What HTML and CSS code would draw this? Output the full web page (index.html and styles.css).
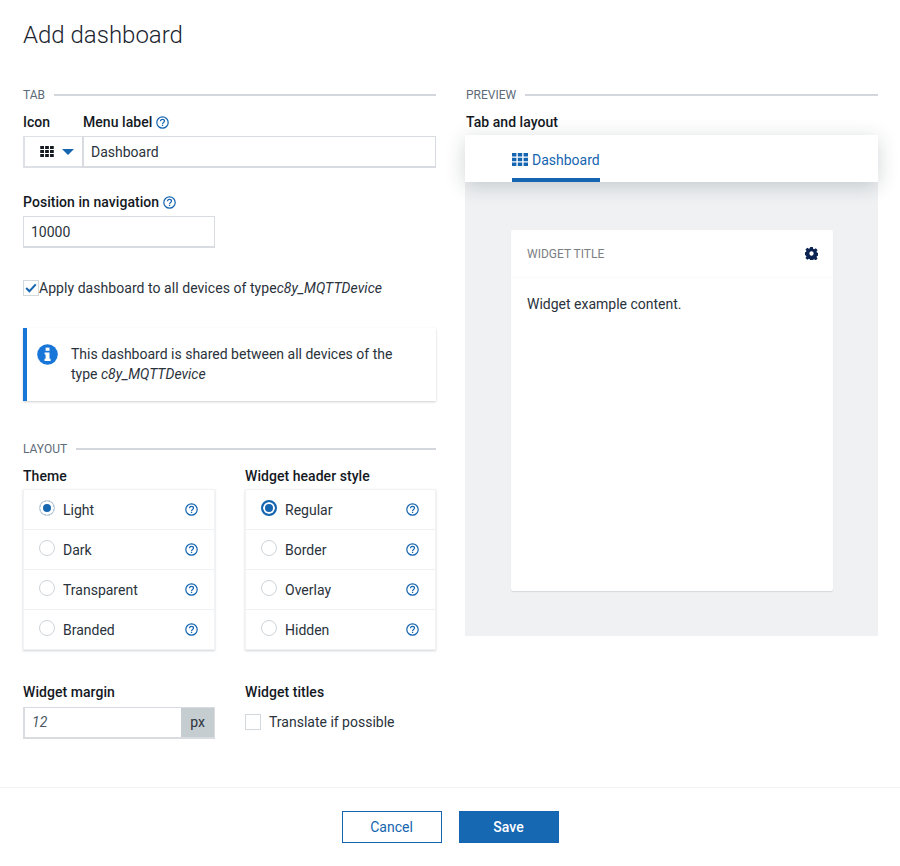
FILE: index.html
```html
<!DOCTYPE html>
<html>
<head>
    <link rel="stylesheet" href="styles.css">
</head>
<body>
    <svg class="icon-defs" width="0" height="0">
        <defs>
            <symbol id="grid" viewBox="0 0 16 13">
                <path d="M0 0h4.4v3.4H0zM5.8 0h4.4v3.4H5.8zM11.6 0H16v3.4h-4.4zM0 4.8h4.4v3.4H0zM5.8 4.8h4.4v3.4H5.8zM11.6 4.8H16v3.4h-4.4zM0 9.6h4.4V13H0zM5.8 9.6h4.4V13H5.8zM11.6 9.6H16V13h-4.4z"/>
            </symbol>
            <symbol id="help" viewBox="0 0 13 13">
                <circle cx="6.5" cy="6.5" r="5.7" fill="none" stroke="currentColor" stroke-width="1.2"/>
                <path d="M4.5 5.2c0-1.2.9-1.9 2-1.9s2 .7 2 1.7c0 1.5-1.9 1.4-1.9 2.9" fill="none" stroke="currentColor" stroke-width="1.2"/>
                <rect x="5.9" y="8.7" width="1.3" height="1.3" fill="currentColor"/>
            </symbol>
        </defs>
    </svg>

    <h1 class="title">Add dashboard</h1>

    <div class="columns">
        <div class="col">
            <div class="legend"><span>TAB</span></div>
            <div class="icon-label-row">
                <label class="lbl lbl-icon">Icon</label>
                <label class="lbl">Menu label <svg class="help help-lbl"><use href="#help"/></svg></label>
            </div>
            <div class="input-group">
                <div class="icon-picker">
                    <svg class="grid-black"><use href="#grid"/></svg>
                    <span class="caret"></span>
                </div>
                <div class="field field-grow">Dashboard</div>
            </div>

            <label class="lbl lbl-position">Position in navigation <svg class="help help-lbl"><use href="#help"/></svg></label>
            <div class="field field-short">10000</div>

            <div class="apply-row">
                <span class="check">
                    <svg width="12" height="10" viewBox="0 0 12 10"><path d="M1.2 5l3.2 3.2L10.8 1.4" fill="none" stroke="#1565b0" stroke-width="2"/></svg>
                </span>
                <span>Apply dashboard to all devices of type<em>c8y_MQTTDevice</em></span>
            </div>

            <div class="info-box">
                <svg class="info-icon" width="21" height="21" viewBox="0 0 21 21">
                    <circle cx="10.5" cy="10.5" r="10.3" fill="#1776d8"/>
                    <rect x="8.6" y="3.6" width="3.9" height="3.2" fill="#fff"/>
                    <path d="M7.6 8.4h4.9v6.4h1.1v2.2H7.5v-2.2h1.1v-4.2h-1z" fill="#fff"/>
                </svg>
                <p>This dashboard is shared between all devices of the type <em>c8y_MQTTDevice</em></p>
            </div>

            <div class="legend legend-layout"><span>LAYOUT</span></div>
            <div class="two-up">
                <div>
                    <label class="lbl">Theme</label>
                    <ul class="radio-list">
                        <li><span class="radio radio-on"></span><span class="radio-text">Light</span><svg class="help"><use href="#help"/></svg></li>
                        <li><span class="radio"></span><span class="radio-text">Dark</span><svg class="help"><use href="#help"/></svg></li>
                        <li><span class="radio"></span><span class="radio-text">Transparent</span><svg class="help"><use href="#help"/></svg></li>
                        <li><span class="radio"></span><span class="radio-text">Branded</span><svg class="help"><use href="#help"/></svg></li>
                    </ul>
                </div>
                <div>
                    <label class="lbl">Widget header style</label>
                    <ul class="radio-list">
                        <li><span class="radio radio-strong"></span><span class="radio-text">Regular</span><svg class="help"><use href="#help"/></svg></li>
                        <li><span class="radio"></span><span class="radio-text">Border</span><svg class="help"><use href="#help"/></svg></li>
                        <li><span class="radio"></span><span class="radio-text">Overlay</span><svg class="help"><use href="#help"/></svg></li>
                        <li><span class="radio"></span><span class="radio-text">Hidden</span><svg class="help"><use href="#help"/></svg></li>
                    </ul>
                </div>
            </div>

            <div class="two-up two-up-bottom">
                <div>
                    <label class="lbl">Widget margin</label>
                    <div class="input-group input-group-margin">
                        <div class="field field-grow field-italic">12</div>
                        <div class="addon">px</div>
                    </div>
                </div>
                <div>
                    <label class="lbl">Widget titles</label>
                    <div class="translate-row">
                        <span class="check"></span>
                        <span>Translate if possible</span>
                    </div>
                </div>
            </div>
        </div>

        <div class="col">
            <div class="legend legend-preview"><span>PREVIEW</span></div>
            <label class="lbl lbl-preview">Tab and layout</label>
            <div class="preview">
                <div class="preview-tabs">
                    <div class="tab">
                        <svg class="grid-blue"><use href="#grid"/></svg>
                        <span>Dashboard</span>
                    </div>
                </div>
                <div class="preview-body">
                    <div class="widget">
                        <div class="widget-head">
                            <span>WIDGET TITLE</span>
                            <svg width="13" height="13" viewBox="0 0 24 24"><path fill="#0b2350" fill-rule="evenodd" d="M9.6 0h4.8l.6 3.3 2 .9 2.8-1.9 3.4 3.4-1.9 2.8.9 2 3.3.6v4.8l-3.3.6-.9 2 1.9 2.8-3.4 3.4-2.8-1.9-2 .9-.6 3.3H9.6L9 22.7l-2-.9-2.8 1.9-3.4-3.4 1.9-2.8-.9-2-3.3-.6V10l3.3-.6.9-2-1.9-2.8 3.4-3.4L7 3.1l2-.9zM12 8a4 4 0 100 8 4 4 0 000-8z"/></svg>
                        </div>
                        <div class="widget-content">Widget example content.</div>
                    </div>
                </div>
            </div>
        </div>
    </div>

    <div class="footer">
        <button class="btn btn-cancel" type="button">Cancel</button>
        <button class="btn btn-save" type="button">Save</button>
    </div>
</body>
</html>
```

FILE: styles.css
```css
* {
    box-sizing: border-box;
}

html, body {
    height: 866px;
    overflow: hidden;
}

body {
    margin: 0;
    background-color: #fff;
    color: #1c2530;
    font-family: Roboto, "Liberation Sans", sans-serif;
    font-size: 14px;
}

.icon-defs {
    position: absolute;
}

.title {
    margin: 0;
    padding: 21px 23px 0;
    height: 87px;
    font-size: 24px;
    line-height: 29px;
    font-weight: 300;
    color: #1c2530;
}

.columns {
    display: grid;
    grid-template-columns: 413px 413px;
    column-gap: 29px;
    padding-left: 23px;
    height: 700px;
}

.legend {
    display: flex;
    align-items: center;
    height: 15px;
    font-size: 12px;
    color: #5d6b78;
}

.legend::after {
    content: "";
    flex: 1;
    height: 2px;
    margin-left: 9px;
    background-color: #d3d7dc;
}

.legend-layout {
    margin-top: 40px;
}

.legend-preview {
    padding-left: 1px;
}

.lbl {
    display: block;
    height: 18px;
    line-height: 18px;
    font-weight: 500;
    color: #14191f;
    letter-spacing: 0.05px;
}

.help {
    width: 13px;
    height: 13px;
    flex: none;
    color: #1565b0;
}

.help-lbl {
    vertical-align: -2px;
}

.icon-label-row {
    display: flex;
    margin-top: 11px;
}

.lbl-icon {
    width: 60px;
}

.input-group {
    display: flex;
    height: 32px;
    margin-top: 5px;
}

.input-group-margin {
    margin-top: 6px;
}

.icon-picker {
    display: flex;
    align-items: center;
    justify-content: flex-end;
    width: 59px;
    padding-right: 8.5px;
    border: 2px solid #dde1e5;
    border-right: 0;
    border-top-width: 1.5px;
}

.grid-black {
    width: 14px;
    height: 11px;
    fill: #14191f;
}

.caret {
    width: 0;
    height: 0;
    margin-left: 7.5px;
    border-left: 6px solid transparent;
    border-right: 6px solid transparent;
    border-top: 6px solid #1565b0;
}

.field {
    height: 32px;
    padding-left: 7px;
    border: 1.5px solid #d8dce1;
    border-bottom-width: 2px;
    line-height: 30px;
    color: #2a323b;
}

.field-grow {
    flex: 1;
    min-width: 0;
    border-left-width: 2px;
}

.field-short {
    width: 192px;
    margin-top: 5px;
}

.field-italic {
    line-height: 28px;
    font-style: italic;
    color: #4d5a66;
    border-right: 0;
}

.lbl-position {
    margin-top: 25px;
}

.apply-row {
    display: flex;
    align-items: center;
    height: 18px;
    margin-top: 31px;
    color: #2a323b;
    letter-spacing: 0.05px;
}

.check {
    display: flex;
    align-items: center;
    justify-content: center;
    flex: none;
    width: 16px;
    height: 16px;
    background-color: #fff;
    border: 1.5px solid #d3d8dd;
}

.info-box {
    display: flex;
    gap: 13px;
    height: 73px;
    margin-top: 31px;
    padding: 16px 28px 0 10px;
    border-left: 4px solid #1776d8;
    box-shadow: 0 1px 2px rgba(30, 40, 50, 0.22);
}

.info-icon {
    flex: none;
}

.info-box p {
    margin: 0;
    line-height: 20px;
    color: #2a323b;
}

.two-up {
    display: grid;
    grid-template-columns: 192px 191px;
    column-gap: 30px;
    margin-top: 11px;
}

.two-up-bottom {
    margin-top: 33px;
}

.radio-list {
    list-style: none;
    margin: 4px 0 0;
    padding: 0;
    box-shadow: 0 1px 2px rgba(30, 40, 50, 0.2);
    border: 1px solid #f2f3f5;
    border-bottom: 0;
}

.radio-list li {
    display: flex;
    align-items: center;
    height: 40px;
    padding: 0 16px 0 15px;
    border-bottom: 1px solid #eff1f3;
}

.radio {
    flex: none;
    width: 16px;
    height: 16px;
    margin: -4px 8px 0 0;
    background-color: #fff;
    border: 1px solid #cfd4da;
    border-radius: 50%;
}

.radio-on {
    background-color: #1565b0;
    box-shadow: inset 0 0 0 3px #fff;
}

.radio-strong {
    border: 2.5px solid #1565b0;
    background-color: #1565b0;
    box-shadow: inset 0 0 0 2px #fff;
}

.radio-text {
    flex: 1;
    color: #2a323b;
}

.addon {
    width: 34px;
    background-color: #c5cdd1;
    border: 1.5px solid #d8dce1;
    border-left: 0;
    border-bottom-width: 2px;
    text-align: center;
    line-height: 29px;
    color: #2a323b;
}

.translate-row {
    display: flex;
    align-items: center;
    gap: 8px;
    height: 18px;
    margin-top: 12px;
    color: #2a323b;
}

.lbl-preview {
    margin-top: 11px;
    padding-left: 1px;
}

.preview {
    margin-top: 4px;
}

.preview-tabs {
    position: relative;
    height: 47px;
    padding-left: 47px;
    background-color: #fff;
    box-shadow: 0 4px 20px rgba(30, 40, 50, 0.2);
}

.tab {
    display: flex;
    align-items: center;
    gap: 4px;
    width: 88px;
    height: 47px;
    padding-top: 7px;
    border-bottom: 4px solid #1565b0;
    color: #1565b0;
}

.grid-blue {
    width: 16px;
    height: 13px;
    margin-top: -2px;
    fill: #1565b0;
}

.preview-body {
    height: 454px;
    padding: 48px 45px 0 46px;
    background-color: #eff1f3;
}

.widget {
    height: 361px;
    background-color: #fff;
    border-radius: 2px;
    box-shadow: 0 1px 1px rgba(30, 40, 50, 0.12);
}

.widget-head {
    display: flex;
    align-items: center;
    justify-content: space-between;
    height: 48px;
    padding: 0 15px 0 16px;
    font-size: 12px;
    color: #7b7f84;
    border-bottom: 1px solid #fafafa;
}

.widget-content {
    padding: 18px 16px 0;
    color: #2a323b;
}

.footer {
    display: flex;
    justify-content: center;
    gap: 17px;
    height: 79px;
    padding-top: 23px;
    border-top: 1px solid #f1f2f4;
}

.btn {
    width: 100px;
    height: 32px;
    font-family: Roboto, "Liberation Sans", sans-serif;
    font-size: 14px;
}

.btn-cancel {
    background-color: #fff;
    border: 1px solid #1565b0;
    color: #1565b0;
}

.btn-save {
    background-color: #1668b3;
    border: 1px solid #1565b0;
    color: #fff;
    font-weight: 500;
}
```
